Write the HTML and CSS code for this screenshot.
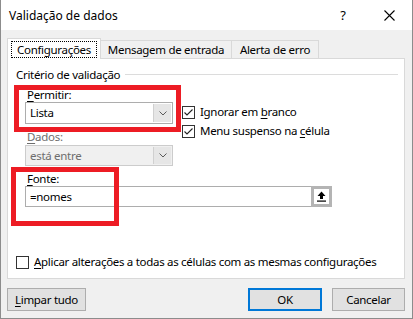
FILE: index.html
```html
<!DOCTYPE html>
<html lang="pt">
<head>
<meta charset="utf-8">
<title>Validação de dados</title>
<link rel="stylesheet" href="styles.css">
</head>
<body>
<div class="window">
  <div class="titlebar">
    <span class="title">Validação de dados</span>
    <span class="capbtn help">?</span>
    <span class="capbtn close"><svg width="11" height="11" viewBox="0 0 11 11"><path d="M0.5 0.5L10.5 10.5M10.5 0.5L0.5 10.5" stroke="#000" stroke-width="1.1" fill="none"/></svg></span>
  </div>
  <div class="client">
    <div class="tabs">
      <div class="tab active"><span class="focus">Configurações</span></div>
      <div class="tab t2">Mensagem de entrada</div>
      <div class="tab t3">Alerta de erro</div>
    </div>
    <div class="panel">
      <div class="group-title"><span>Critério de validação</span><span class="rule"></span></div>
      <div class="upper">
        <div class="fields">
          <div class="label"><u>P</u>ermitir:</div>
          <div class="combo"><span class="value">Lista</span><span class="drop"><svg width="8" height="5" viewBox="0 0 8 5"><path d="M0.5 0.5L4 4L7.5 0.5" stroke="#5a5a5a" fill="none"/></svg></span></div>
          <div class="label disabled"><u>D</u>ados:</div>
          <div class="combo off"><span class="value">está entre</span><span class="drop"><svg width="8" height="5" viewBox="0 0 8 5"><path d="M0.5 0.5L4 4L7.5 0.5" stroke="#5a5a5a" fill="none"/></svg></span></div>
        </div>
        <div class="checks">
          <div class="check"><span class="box"><svg width="11" height="11" viewBox="0 0 11 11"><path d="M1.5 5.5L4 8L9.5 2.5" stroke="#222" stroke-width="1.1" fill="none"/></svg></span><span>Ignorar em <u>b</u>ranco</span></div>
          <div class="check"><span class="box"><svg width="11" height="11" viewBox="0 0 11 11"><path d="M1.5 5.5L4 8L9.5 2.5" stroke="#222" stroke-width="1.1" fill="none"/></svg></span><span>Menu suspenso na <u>c</u>élula</span></div>
        </div>
      </div>
      <div class="label source"><u>F</u>onte:</div>
      <div class="refedit"><span class="value">=nomes</span><span class="refbtn"><svg width="11" height="11" viewBox="0 0 11 11"><path d="M5.5 0.5L9.5 5H7V8H4V5H1.5Z" fill="#000"/><rect x="1" y="9.5" width="9" height="1.2" fill="#000"/></svg></span></div>
      <div class="check apply"><span class="box"></span><span><u>A</u>plicar alterações a todas as células com as mesmas configurações</span></div>
    </div>
    <div class="footer">
      <button class="btn clear"><u>L</u>impar tudo</button>
      <button class="btn ok">OK</button>
      <button class="btn cancel">Cancelar</button>
    </div>
  </div>
  <div class="mark mark1"></div>
  <div class="mark mark2"></div>
</div>
</body>
</html>
```
FILE: styles.css
```css
html, body {
  margin: 0;
  padding: 0;
  background: #fff;
}
.window {
  position: relative;
  width: 413px;
  height: 319px;
  box-sizing: border-box;
  border: 1px solid #8c8c8c;
  border-top: none;
  background: #f0f0f0;
  font-family: "Noto Sans", "Open Sans", sans-serif;
  font-size: 11.5px;
  letter-spacing: -0.3px;
  color: #000;
  overflow: hidden;
}
u { text-decoration: underline; text-underline-offset: 2px; }
.titlebar {
  height: 30px;
  background: #fff;
  display: flex;
  align-items: center;
}
.title {
  padding-left: 8px;
  font-size: 12px;
  letter-spacing: 0;
  flex: 1;
}
.capbtn {
  width: 46px;
  height: 30px;
  display: flex;
  align-items: center;
  justify-content: center;
}
.help { font-size: 13px; letter-spacing: 0; }
.client {
  padding: 8px 7px 0 6px;
}
.tabs {
  display: flex;
  align-items: flex-start;
  height: 21px;
  margin-bottom: -1px;
  position: relative;
  z-index: 1;
}
.tab {
  box-sizing: border-box;
  height: 18px;
  margin-top: 2px;
  border: 1px solid #d9d9d9;
  border-bottom: none;
  display: flex;
  align-items: center;
  justify-content: center;
  white-space: nowrap;
}
.tab.active {
  height: 21px;
  margin-top: 0;
  width: 94px;
  background: #fff;
}
.focus {
  outline: 1px dotted #000;
  outline-offset: 0;
  padding: 0 5px;
  line-height: 15px;
  margin-top: 1px;
}
.t2 { width: 131px; border-left: none; }
.t3 { width: 87px; border-left: none; }
.panel {
  box-sizing: border-box;
  height: 221px;
  background: #fff;
  border: 1px solid #d9d9d9;
  padding: 8px 6px 0 8px;
  display: flex;
  flex-direction: column;
}
.group-title {
  display: flex;
  align-items: center;
  line-height: 15px;
  height: 15px;
}
.rule {
  flex: 1;
  height: 1px;
  background: #dcdcdc;
  margin-left: 5px;
}
.upper {
  display: flex;
  margin-top: 5px;
}
.fields {
  margin-left: 9px;
  width: 148px;
}
.label {
  line-height: 15px;
  padding-left: 2px;
}
.label.disabled { color: #6d6d6d; margin-top: 5px; }
.combo {
  box-sizing: border-box;
  height: 22px;
  border: 1px solid #adadad;
  background: #fff;
  display: flex;
}
.combo .value {
  flex: 1;
  padding-left: 4px;
  line-height: 20px;
}
.drop {
  width: 17px;
  margin: 1px;
  background: #e6e6e6;
  border-left: 1px solid #d0d0d0;
  display: flex;
  align-items: center;
  justify-content: center;
}
.combo.off {
  height: 21px;
  margin-top: 1px;
  background: #f0f0f0;
  border-color: #cccccc;
  color: #6d6d6d;
}
.combo.off .value { line-height: 19px; }
.combo.off .drop { background: #e6e6e6; }
.checks {
  margin-left: 9px;
  padding-top: 18px;
  display: flex;
  flex-direction: column;
  gap: 5px;
}
.check {
  display: flex;
  align-items: center;
  line-height: 14px;
  white-space: nowrap;
}
.box {
  box-sizing: border-box;
  flex: none;
  width: 13px;
  height: 13px;
  border: 1px solid #333;
  background: #fff;
  margin-right: 5px;
  display: flex;
  align-items: center;
  justify-content: center;
}
.label.source { margin-left: 9px; margin-top: 5px; }
.refedit {
  margin-left: 9px;
  box-sizing: border-box;
  width: 307px;
  height: 21px;
  border: 1px solid #adadad;
  display: flex;
}
.refedit .value {
  flex: 1;
  padding-left: 4px;
  line-height: 19px;
}
.refbtn {
  box-sizing: border-box;
  width: 21px;
  height: 21px;
  margin: -1px -1px -1px 0;
  border: 3px solid #b4b4b4;
  background: #fff;
  display: flex;
  align-items: center;
  justify-content: center;
}
.check.apply {
  margin-top: 48px;
  margin-left: 0;
}
.footer {
  display: flex;
  padding-top: 9px;
}
.btn {
  box-sizing: border-box;
  height: 23px;
  font: inherit;
  letter-spacing: inherit;
  color: #000;
  background: #e1e1e1;
  border: 1px solid #adadad;
  padding: 0;
}
.clear { width: 79px; }
.ok {
  width: 74px;
  margin-left: auto;
  border: 2px solid #0078d7;
}
.cancel { width: 73px; margin-left: 10px; }
.mark {
  position: absolute;
  box-sizing: border-box;
  border: 5px solid #ed1c24;
}
.mark1 { left: 13px; top: 85px; width: 167px; height: 47px; }
.mark2 { left: 10px; top: 167px; width: 108px; height: 59px; }
```
